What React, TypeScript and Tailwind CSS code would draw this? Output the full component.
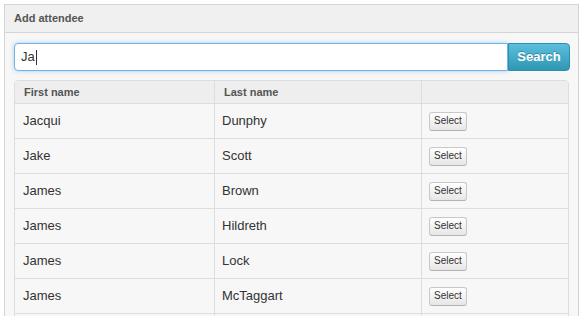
import React from 'react';

const people = [
  { first: 'Jacqui', last: 'Dunphy' },
  { first: 'Jake', last: 'Scott' },
  { first: 'James', last: 'Brown' },
  { first: 'James', last: 'Hildreth' },
  { first: 'James', last: 'Lock' },
  { first: 'James', last: 'McTaggart' },
];

export default function App() {
  return (
    <div
      className="w-[585px] h-[316px] overflow-hidden bg-white pt-[4px] pl-[4px] pr-[6px]"
      style={{ fontFamily: '"Liberation Sans", Arial, sans-serif' }}
    >
      <div className="border border-[#d4d4d4] h-[330px] bg-[#f7f7f7]">
        <div className="h-[28px] bg-[#f0f0f0] border-b border-[#d4d4d4] px-[9px] flex items-center">
          <span className="text-[11px] font-bold text-[#555]">Add attendee</span>
        </div>

        <div className="pl-[9px] pr-[9px] pt-[10px]">
          <div className="flex h-[28px] w-[556px]">
            <div className="flex-1 bg-white border border-[#6fb3ea] rounded-l-[4px] shadow-[0_0_4px_rgba(82,168,236,0.5)] flex items-center px-[6px]">
              <span className="text-[13px] text-[#333]">Ja</span>
              <span className="w-px h-[15px] bg-[#333] ml-px" />
            </div>
            <button
              type="button"
              className="w-[62px] rounded-r-[4px] border border-[#2b8fae] bg-gradient-to-b from-[#5bc0de] to-[#2f96b4] text-white text-[13px] font-bold [text-shadow:0_-1px_0_rgba(0,0,0,0.25)]"
            >
              Search
            </button>
          </div>

          <div className="mt-[9px] w-[555px] border border-[#dddddd] rounded-t-[4px] overflow-hidden">
            <div className="grid grid-cols-[199px_207px_1fr] h-[23px] bg-[#eeeeee] border-b border-[#dddddd]">
              <div className="px-[9px] flex items-center text-[11px] font-bold text-[#555]">First name</div>
              <div className="px-[9px] flex items-center text-[11px] font-bold text-[#555] border-l border-[#dddddd]">Last name</div>
              <div className="border-l border-[#dddddd]" />
            </div>
            {people.map((p, i) => (
              <div
                key={i}
                className="grid grid-cols-[199px_207px_1fr] h-[35px] bg-[#f7f7f7] border-b border-[#dddddd]"
              >
                <div className="px-[8px] flex items-center text-[13px] text-[#333]">{p.first}</div>
                <div className="px-[7px] flex items-center text-[13px] text-[#333] border-l border-[#dddddd]">{p.last}</div>
                <div className="pl-[7px] flex items-center border-l border-[#dddddd]">
                  <button
                    type="button"
                    className="w-[38px] h-[19px] rounded-[3px] border border-[#c8c8c8] border-b-[#b3b3b3] bg-gradient-to-b from-white to-[#e6e6e6] text-[10px] text-[#333] leading-none"
                  >
                    Select
                  </button>
                </div>
              </div>
            ))}
            {/* next row is scrolled out of view */}
            <div className="grid grid-cols-[199px_207px_1fr] h-[35px] bg-[#f7f7f7]">
              <div />
              <div className="border-l border-[#dddddd]" />
              <div className="border-l border-[#dddddd]" />
            </div>
          </div>
        </div>
      </div>
    </div>
  );
}
